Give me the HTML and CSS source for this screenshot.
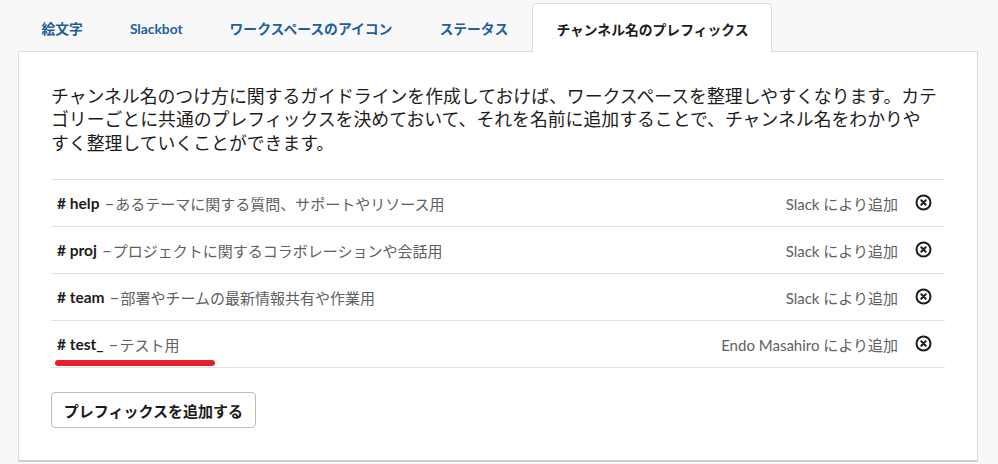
FILE: index.html
```html
<!DOCTYPE html>
<html lang="ja">
<head>
<meta charset="utf-8">
<link rel="stylesheet" href="styles.css">
</head>
<body>
<div class="page">
  <nav class="tabs">
    <div class="tab">絵文字</div>
    <div class="tab">Slackbot</div>
    <div class="tab">ワークスペースのアイコン</div>
    <div class="tab">ステータス</div>
    <div class="tab active">チャンネル名のプレフィックス</div>
  </nav>
  <section class="panel">
    <p class="intro">チャンネル名のつけ方に関するガイドラインを作成しておけば、ワークスペースを整理しやすくなります。カテ<br>ゴリーごとに共通のプレフィックスを決めておいて、それを名前に追加することで、チャンネル名をわかりや<br>すく整理していくことができます。</p>
    <ul class="list">
      <li class="row">
        <span class="name"># help</span><span class="dash">–</span><span class="desc">あるテーマに関する質問、サポートやリソース用</span>
        <span class="by">Slack により追加</span>
        <span class="remove"><svg viewBox="0 0 17 17" width="17" height="17"><circle cx="8.5" cy="8.5" r="7" fill="none" stroke="#1d1c1d" stroke-width="2"/><path d="M6.3 6.3L10.7 10.7M10.7 6.3L6.3 10.7" stroke="#1d1c1d" stroke-width="2" stroke-linecap="round"/></svg></span>
      </li>
      <li class="row">
        <span class="name"># proj</span><span class="dash">–</span><span class="desc">プロジェクトに関するコラボレーションや会話用</span>
        <span class="by">Slack により追加</span>
        <span class="remove"><svg viewBox="0 0 17 17" width="17" height="17"><circle cx="8.5" cy="8.5" r="7" fill="none" stroke="#1d1c1d" stroke-width="2"/><path d="M6.3 6.3L10.7 10.7M10.7 6.3L6.3 10.7" stroke="#1d1c1d" stroke-width="2" stroke-linecap="round"/></svg></span>
      </li>
      <li class="row">
        <span class="name"># team</span><span class="dash">–</span><span class="desc">部署やチームの最新情報共有や作業用</span>
        <span class="by">Slack により追加</span>
        <span class="remove"><svg viewBox="0 0 17 17" width="17" height="17"><circle cx="8.5" cy="8.5" r="7" fill="none" stroke="#1d1c1d" stroke-width="2"/><path d="M6.3 6.3L10.7 10.7M10.7 6.3L6.3 10.7" stroke="#1d1c1d" stroke-width="2" stroke-linecap="round"/></svg></span>
      </li>
      <li class="row">
        <span class="name"># test_</span><span class="dash">–</span><span class="desc">テスト用</span>
        <span class="by">Endo Masahiro により追加</span>
        <span class="remove"><svg viewBox="0 0 17 17" width="17" height="17"><circle cx="8.5" cy="8.5" r="7" fill="none" stroke="#1d1c1d" stroke-width="2"/><path d="M6.3 6.3L10.7 10.7M10.7 6.3L6.3 10.7" stroke="#1d1c1d" stroke-width="2" stroke-linecap="round"/></svg></span>
        <span class="redline"></span>
      </li>
    </ul>
    <button class="add">プレフィックスを追加する</button>
  </section>
</div>
</body>
</html>
```
FILE: styles.css
```css
* { box-sizing: border-box; }
html, body { margin: 0; padding: 0; }
body {
  background: #f8f8f8;
  font-family: Lato, "Noto Sans CJK JP", sans-serif;
  color: #1d1c1d;
  width: 998px;
  height: 464px;
  overflow: hidden;
}
.page {
  padding: 3px 0 0 18px;
  width: 978px;
}
.tabs {
  display: flex;
  height: 49px;
  position: relative;
  z-index: 1;
}
.tab {
  padding: 1px 23.5px 0;
  height: 49px;
  display: flex;
  align-items: center;
  font-size: 13.8px;
  font-weight: 700;
  color: #1e5f9f;
  white-space: nowrap;
}
.tab.active {
  background: #fff;
  color: #1d1c1d;
  border: 1px solid #dddddd;
  border-bottom: none;
  border-radius: 4px 4px 0 0;
  height: 50px;
  padding: 0 23px;
  margin-left: 0.5px;
}
.panel {
  background: #fff;
  border: 1px solid #dddddd;
  border-bottom: 2px solid #cfcfcf;
  margin-top: -1px;
  padding: 32px 32px 32px 32px;
  width: 960px;
}
.intro {
  margin: 0 0 25.5px 0;
  font-family: "Noto Sans CJK JP", sans-serif;
  font-size: 17.85px;
  line-height: 23.3px;
  color: #1d1c1d;
  white-space: nowrap;
}
.list {
  list-style: none;
  margin: 0;
  padding: 0;
  border-top: 1px solid #e2e2e2;
}
.row {
  position: relative;
  display: flex;
  align-items: center;
  height: 47px;
  border-bottom: 1px solid #e2e2e2;
  padding: 0 13px 0 6px;
  font-size: 15px;
}
.name {
  font-weight: 700;
  font-size: 15.5px;
  color: #1d1c1d;
  white-space: pre;
}
.dash {
  color: #616061;
  font-size: 17px;
  margin: 0 1px 0 5px;
}
.desc {
  color: #616061;
  flex: 1;
}
.by {
  color: #616061;
  margin-right: 17px;
}
.remove {
  display: flex;
  width: 17px;
  height: 17px;
  margin-top: -2px;
}
.redline {
  position: absolute;
  left: 4px;
  bottom: 1px;
  width: 160px;
  height: 6px;
  border-radius: 3px;
  background: #e5202a;
}
.add {
  margin-top: 24px;
  height: 36px;
  width: 205px;
  background: #fff;
  border: 1px solid #bdbdbd;
  border-radius: 4px;
  font-family: Lato, "Noto Sans CJK JP", sans-serif;
  font-size: 15px;
  font-weight: 700;
  color: #1d1c1d;
  padding: 0;
}
```
